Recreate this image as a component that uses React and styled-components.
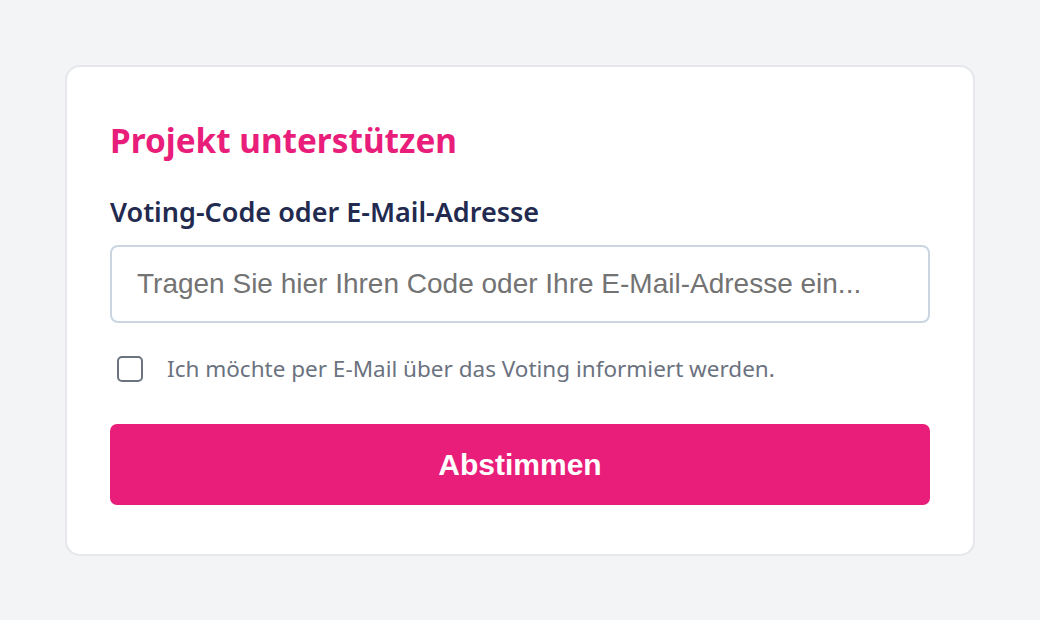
import React from 'react';
import styled, { createGlobalStyle } from 'styled-components';

const GlobalStyle = createGlobalStyle`
    body {
        margin:0;
        background:#f3f4f6;
        font-family:"Noto Sans", "Open Sans", sans-serif;
    }
`;

const Page = styled.div`
    padding:65px 65px;
    min-height:620px;
    box-sizing:border-box;
`;

const Card = styled.div`
    width:910px;
    box-sizing:border-box;
    padding:53px 43px 49px;
    background:#ffffff;
    border:2px solid #e5e7eb;
    border-radius:15px;
    display:flex;
    flex-direction:column;
`;

const Title = styled.h2`
    margin:0;
    font-size:33.3px;
    line-height:40px;
    font-weight:700;
    color:#e91e7b;
`;

const Label = styled.label`
    margin-top:35px;
    font-size:27px;
    line-height:34px;
    font-weight:600;
    color:#222a4f;
`;

const Input = styled.input`
    margin-top:16px;
    height:78px;
    box-sizing:border-box;
    padding:0 25px;
    border:2px solid #cbd5e1;
    border-radius:8px;
    font-family:"Liberation Sans", Arial, sans-serif;
    font-size:28px;
    color:#333;
    outline:none;
    &::placeholder {
        color:#737373;
    }
`;

const CheckRow = styled.label`
    margin-top:33px;
    display:flex;
    align-items:center;
    gap:24px;
    padding-left:7px;
    font-size:22.5px;
    line-height:26px;
    color:#6b7280;
`;

const Box = styled.span`
    width:26px;
    height:26px;
    box-sizing:border-box;
    border:2px solid #6b7280;
    border-radius:5px;
    flex-shrink:0;
`;

const Button = styled.button`
    margin-top:42px;
    height:81px;
    border:none;
    border-radius:7px;
    background:#e91e7b;
    color:#ffffff;
    font-family:"Liberation Sans", Arial, sans-serif;
    font-size:30px;
    font-weight:700;
    cursor:pointer;
`;

function App(){
    return (
        <>
            <GlobalStyle />
            <Page>
                <Card>
                    <Title>Projekt unterstützen</Title>
                    <Label>Voting-Code oder E-Mail-Adresse</Label>
                    <Input placeholder="Tragen Sie hier Ihren Code oder Ihre E-Mail-Adresse ein..." />
                    <CheckRow>
                        <Box />
                        Ich möchte per E-Mail über das Voting informiert werden.
                    </CheckRow>
                    <Button>Abstimmen</Button>
                </Card>
            </Page>
        </>
    )
}

export default App;
